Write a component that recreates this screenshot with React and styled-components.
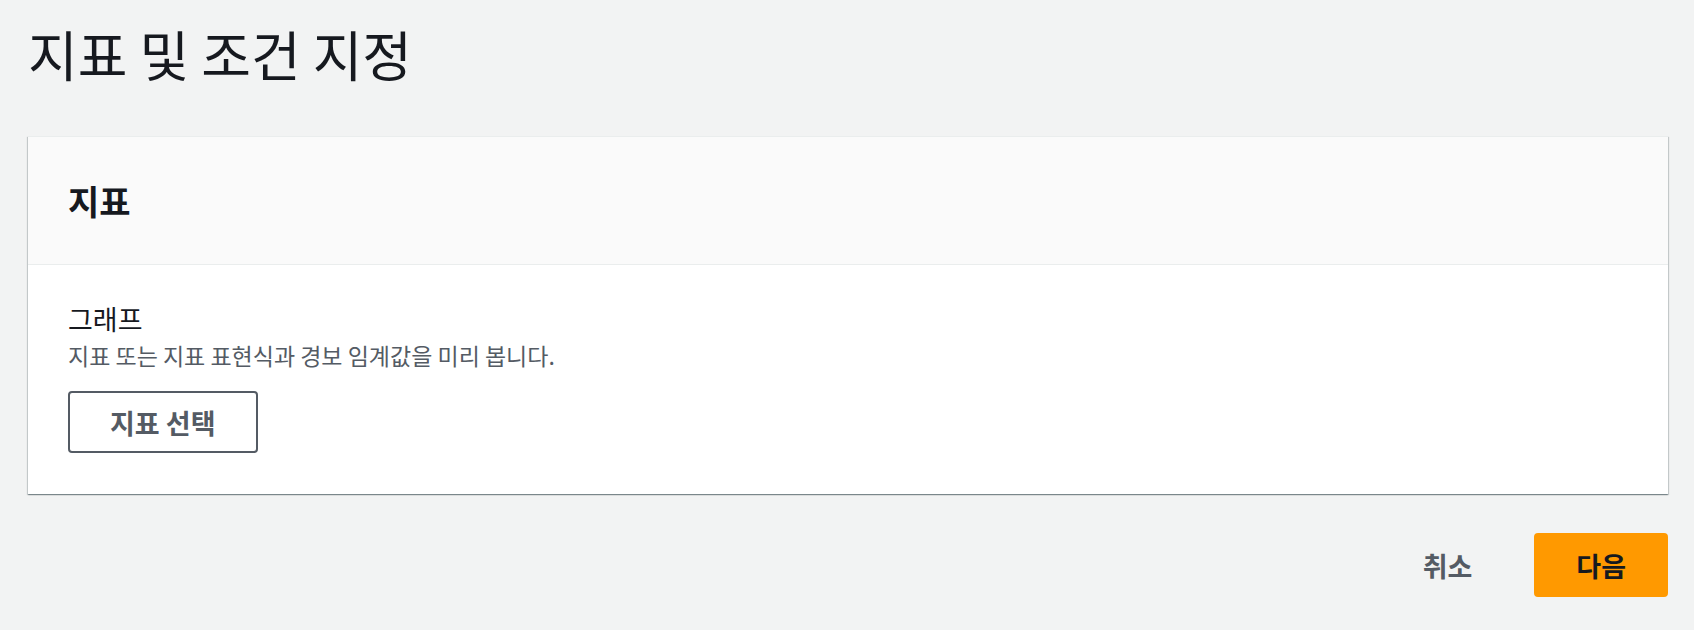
import React from 'react'
import styled, { createGlobalStyle } from 'styled-components'

const GlobalStyle = createGlobalStyle`
  html, body {
    margin: 0;
    padding: 0;
    background: #f2f3f3;
  }
  body {
    font-family: 'Noto Sans CJK KR', 'Noto Sans', sans-serif;
    color: #16191f;
  }
`

const Page = styled.div`
  padding: 18px 26px 32px 28px;
  min-height: 630px;
  box-sizing: border-box;
`

const Title = styled.h1`
  margin: 0 0 46px;
  font-size: 54px;
  font-weight: 400;
  line-height: 72px;
  color: #16191f;
`

const Card = styled.section`
  background: #ffffff;
  box-shadow: 0 1px 1px 0 rgba(0, 28, 36, 0.3), 1px 1px 1px 0 rgba(0, 28, 36, 0.15),
    -1px 1px 1px 0 rgba(0, 28, 36, 0.15);
  border-top: 1px solid #eaeded;
`

const CardHeader = styled.header`
  background: #fafafa;
  border-bottom: 1px solid #eaeded;
  height: 127px;
  padding: 0 40px;
  display: flex;
  align-items: center;
`

const CardTitle = styled.h2`
  margin: 0;
  font-size: 34px;
  font-weight: 700;
  color: #16191f;
`

const CardBody = styled.div`
  padding: 35px 40px 41px;
  display: flex;
  flex-direction: column;
  align-items: flex-start;
`

const Label = styled.div`
  font-size: 27px;
  line-height: 37px;
  color: #16191f;
`

const Description = styled.div`
  font-size: 23px;
  line-height: 36px;
  color: #545b64;
  margin-bottom: 18px;
`

const Button = styled.button`
  font-family: inherit;
  font-size: 27px;
  font-weight: 700;
  cursor: pointer;
  border-radius: 4px;
  height: ${p => p.$h || 62}px;
  padding: 0 ${p => p.$px || 40}px;
  border: 2px solid ${p => (p.$variant === 'primary' ? '#ff9900' : p.$variant === 'link' ? 'transparent' : '#545b64')};
  background: ${p => (p.$variant === 'primary' ? '#ff9900' : p.$variant === 'link' ? 'transparent' : '#ffffff')};
  color: ${p => (p.$variant === 'primary' ? '#16191f' : '#545b64')};
`

const Footer = styled.div`
  display: flex;
  justify-content: flex-end;
  align-items: center;
  gap: 40px;
  margin-top: 39px;
`

export default function App() {
  return (
    <>
      <GlobalStyle />
      <Page>
        <Title>지표 및 조건 지정</Title>
        <Card>
          <CardHeader>
            <CardTitle>지표</CardTitle>
          </CardHeader>
          <CardBody>
            <Label>그래프</Label>
            <Description>지표 또는 지표 표현식과 경보 임계값을 미리 봅니다.</Description>
            <Button>지표 선택</Button>
          </CardBody>
        </Card>
        <Footer>
          <Button $variant="link" $px={20} $h={64}>취소</Button>
          <Button $variant="primary" $px={40} $h={64}>다음</Button>
        </Footer>
      </Page>
    </>
  )
}
